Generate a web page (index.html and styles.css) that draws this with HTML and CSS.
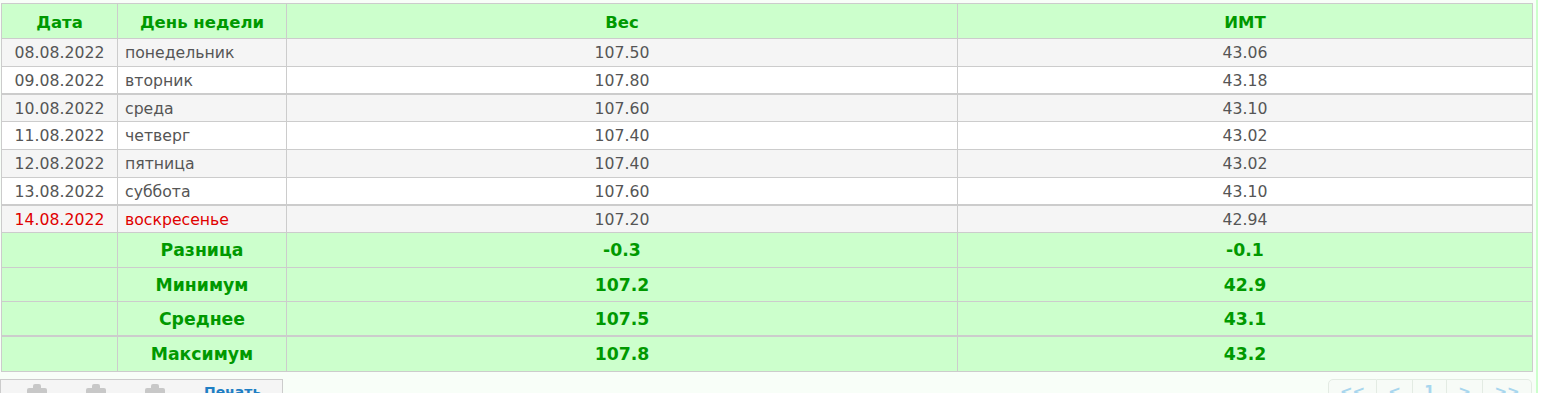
FILE: index.html
```html
<!DOCTYPE html>
<html>
<head>
<meta charset="utf-8">
<link rel="stylesheet" href="styles.css">
</head>
<body>
<div class="page">
  <table class="grid">
    <colgroup>
      <col class="c1"><col class="c2"><col class="c3"><col class="c4">
    </colgroup>
    <thead>
      <tr class="head"><th>Дата</th><th>День недели</th><th>Вес</th><th>ИМТ</th></tr>
    </thead>
    <tbody>
      <tr class="odd"><td class="dt">08.08.2022</td><td class="wd">понедельник</td><td>107.50</td><td>43.06</td></tr>
      <tr class="pre"><td class="dt">09.08.2022</td><td class="wd">вторник</td><td>107.80</td><td>43.18</td></tr>
      <tr class="odd thick"><td class="dt">10.08.2022</td><td class="wd">среда</td><td>107.60</td><td>43.10</td></tr>
      <tr><td class="dt">11.08.2022</td><td class="wd">четверг</td><td>107.40</td><td>43.02</td></tr>
      <tr class="odd"><td class="dt">12.08.2022</td><td class="wd">пятница</td><td>107.40</td><td>43.02</td></tr>
      <tr class="pre"><td class="dt">13.08.2022</td><td class="wd">суббота</td><td>107.60</td><td>43.10</td></tr>
      <tr class="odd thick sun"><td class="dt">14.08.2022</td><td class="wd">воскресенье</td><td>107.20</td><td>42.94</td></tr>
    </tbody>
    <tfoot>
      <tr class="sum first"><td></td><td>Разница</td><td>-0.3</td><td>-0.1</td></tr>
      <tr class="sum"><td></td><td>Минимум</td><td>107.2</td><td>42.9</td></tr>
      <tr class="sum"><td></td><td>Среднее</td><td>107.5</td><td>43.1</td></tr>
      <tr class="sum thick last"><td></td><td>Максимум</td><td>107.8</td><td>43.2</td></tr>
    </tfoot>
  </table>
  <div class="bar">
    <div class="tools">
      <span class="tool"><span class="knob"></span><span class="body"></span></span>
      <span class="tool"><span class="knob"></span><span class="body"></span></span>
      <span class="tool"><span class="knob"></span><span class="body"></span></span>
      <span class="print">Печать</span>
    </div>
    <div class="pager">
      <span class="pg w1">&lt;&lt;</span><span class="pg w2">&lt;</span><span class="pg w3">1</span><span class="pg w2">&gt;</span><span class="pg w1">&gt;&gt;</span>
    </div>
  </div>
</div>
</body>
</html>
```
FILE: styles.css
```css
html, body {
  margin: 0;
  padding: 0;
  background: #ffffff;
}
body {
  font-family: "DejaVu Sans", Verdana, sans-serif;
}
.page {
  width: 1538px;
  height: 393px;
  border-right: 2px solid #ccffcc;
  background: #f8fef8;
  padding-top: 3px;
  box-sizing: border-box;
  overflow: hidden;
}
.grid {
  border-collapse: collapse;
  width: 1531px;
  margin-left: 1px;
  table-layout: fixed;
  background: #fff;
}
.c1 { width: 116px; }
.c2 { width: 169px; }
.c3 { width: 671px; }
.c4 { width: 575px; }
.grid th, .grid td {
  border: 1px solid #cccccc;
  padding: 0;
  text-align: center;
  white-space: nowrap;
}
.head th {
  background: #ccffcc;
  color: #009900;
  font-weight: bold;
  font-size: 16.5px;
  height: 35px;
  padding-top: 2px;
  box-sizing: border-box;
}
tbody td {
  height: 27px;
  font-size: 15.7px;
  color: #555555;
  padding-top: 1px;
}
tbody tr.odd td { background: #f5f5f5; }
tbody td.wd { text-align: left; padding-left: 7px; }
tr.thick td { border-top-width: 2px; }
tbody tr.pre td { height: 26px; }
tbody tr.thick td { height: 26px; }
tr.sun td.dt, tr.sun td.wd { color: #e00000; }
tfoot td {
  background: #ccffcc;
  color: #009900;
  font-weight: bold;
  font-size: 17.3px;
  height: 33px;
}
tfoot tr.first td { height: 34px; }
tfoot tr.last td { height: 34px; }
.bar {
  display: flex;
  justify-content: space-between;
  margin-top: 7px;
  width: 1532px;
}
.tools {
  display: flex;
  align-items: flex-start;
  width: 283px;
  height: 30px;
  border: 1px solid #cccccc;
  background: #f5f5f5;
  box-sizing: border-box;
  padding-left: 25px;
}
.tool {
  display: flex;
  flex-direction: column;
  align-items: center;
  width: 22px;
  margin-right: 37px;
  padding-top: 4px;
}
.tool:nth-child(3) { margin-right: 38px; }
.knob {
  width: 8px;
  height: 4px;
  background: #c8c8c8;
  border-radius: 2px 2px 0 0;
}
.body {
  width: 20px;
  height: 12px;
  background: #c8c8c8;
  border-radius: 2px;
}
.print {
  color: #1f7fc4;
  font-weight: bold;
  font-size: 14px;
  padding-top: 4px;
}
.pager {
  display: flex;
  height: 30px;
}
.pg {
  height: 30px;
  border: 1px solid #e3ebe3;
  border-left: none;
  background: #f7fbf7;
  color: #a8d6ee;
  font-size: 15px;
  font-weight: bold;
  text-align: center;
  box-sizing: border-box;
  padding-top: 3px;
}
.pg:first-child { border-left: 1px solid #e3ebe3; border-radius: 5px 0 0 0; }
.pg:last-child { border-radius: 0 5px 0 0; }
.w1 { width: 49px; }
.w2 { width: 36px; }
.w3 { width: 34px; }
```
